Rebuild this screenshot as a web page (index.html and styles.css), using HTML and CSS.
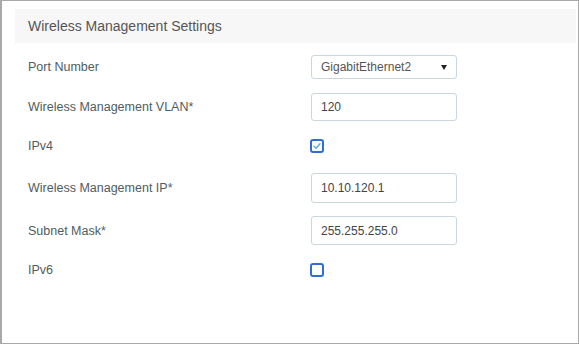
FILE: index.html
```html
<!DOCTYPE html>
<html>
<head>
<meta charset="utf-8">
<link rel="stylesheet" href="styles.css">
</head>
<body>
<div class="frame">
  <div class="header">Wireless Management Settings</div>
  <div class="form">
    <div class="row r1">
      <span class="label">Port Number</span>
      <div class="select">
        <span>GigabitEthernet2</span>
        <span class="caret"></span>
      </div>
    </div>
    <div class="row r2">
      <span class="label">Wireless Management VLAN*</span>
      <div class="input h28">120</div>
    </div>
    <div class="row r3">
      <span class="label">IPv4</span>
      <span class="check checked">
        <svg width="10" height="10" viewBox="0 0 10 10"><path d="M2 5.2 L4.1 7.2 L8 2.8" fill="none" stroke="#5aa9e6" stroke-width="1.4" stroke-linecap="round" stroke-linejoin="round"/></svg>
      </span>
    </div>
    <div class="row r4">
      <span class="label">Wireless Management IP*</span>
      <div class="input h30">10.10.120.1</div>
    </div>
    <div class="row r5">
      <span class="label">Subnet Mask*</span>
      <div class="input h29">255.255.255.0</div>
    </div>
    <div class="row r6">
      <span class="label">IPv6</span>
      <span class="check"></span>
    </div>
  </div>
</div>
</body>
</html>
```

FILE: styles.css
```css
* { box-sizing: border-box; }
html, body { margin: 0; padding: 0; background: #fff; }
body {
  font-family: "Liberation Sans", Arial, sans-serif;
  width: 579px;
  height: 344px;
  overflow: hidden;
}
.frame {
  width: 579px;
  height: 344px;
  border: 1px solid #a9a9a9;
  border-left-width: 2px;
  padding: 8px 2px 0 13px;
}
.header {
  height: 34px;
  background: #f7f7f7;
  display: flex;
  align-items: center;
  padding-left: 13px;
  font-size: 14px;
  color: #555;
}
.form {
  padding-top: 4px;
}
.row {
  height: 40px;
  display: grid;
  grid-template-columns: 283px 146px;
  align-items: center;
  padding-left: 13px;
}
.r2 { height: 39px; }
.r3 { height: 39px; }
.r4 { height: 45px; }
.r5 { height: 41px; }
.r6 { height: 38px; }
.label {
  font-size: 12.5px;
  color: #4f5d5d;
}
.select, .input {
  width: 146px;
  border: 1px solid #c9d6de;
  border-radius: 3px;
  font-size: 12px;
  color: #444;
  display: flex;
  align-items: center;
  padding-left: 9px;
}
.select {
  height: 24px;
  justify-content: space-between;
  padding-right: 9px;
  color: #555;
}
.caret {
  width: 0;
  height: 0;
  border-left: 3.5px solid transparent;
  border-right: 3.5px solid transparent;
  border-top: 5px solid #222;
}
.h28 { height: 28px; }
.h29 { height: 29px; }
.h30 { height: 30px; }
.check {
  width: 14px;
  height: 14px;
  border: 2px solid #2f6fd3;
  border-radius: 3px;
  display: flex;
  align-items: center;
  justify-content: center;
  margin-left: -1px;
}
.check svg { display: block; }
```
